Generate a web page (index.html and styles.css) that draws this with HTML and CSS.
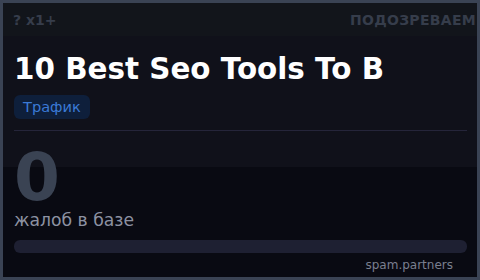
FILE: index.html
```html
<!DOCTYPE html>
<html lang="ru">
<head>
<meta charset="utf-8">
<link rel="stylesheet" href="styles.css">
</head>
<body>
<div class="frame">
  <div class="topbar">
    <span class="meta">? x1+</span>
    <span class="status">ПОДОЗРЕВАЕМ</span>
  </div>
  <div class="content">
    <h1 class="title">10 Best Seo Tools To B</h1>
    <span class="tag">Трафик</span>
    <hr class="divider">
    <div class="count">0</div>
    <div class="label">жалоб в базе</div>
    <div class="bar"></div>
    <div class="source">spam.partners</div>
  </div>
</div>
</body>
</html>
```
FILE: styles.css
```css
html, body {
  margin: 0;
  padding: 0;
  width: 480px;
  height: 280px;
  overflow: hidden;
  background: #090a12;
}
.frame {
  box-sizing: border-box;
  width: 480px;
  height: 280px;
  border: 3px solid #3a4354;
  overflow: hidden;
  display: flex;
  flex-direction: column;
  font-family: "DejaVu Sans", sans-serif;
}
.topbar {
  flex: none;
  height: 33px;
  display: flex;
  align-items: center;
  padding: 0 1px 0 10px;
  background: #12151b;
  font-weight: bold;
  color: #363d4b;
  white-space: nowrap;
}
.meta {
  font-size: 14px;
}
.status {
  margin-left: auto;
  font-size: 14px;
  letter-spacing: 0.3px;
}
.content {
  flex: 1;
  display: flex;
  flex-direction: column;
  align-items: flex-start;
  padding: 17px 10px 0 11px;
  background: linear-gradient(#10111a 0, #10111a 131px, #090a12 131px);
}
.title {
  margin: 0;
  font-size: 29.4px;
  font-weight: bold;
  color: #ffffff;
  white-space: nowrap;
  line-height: 33px;
}
.tag {
  margin-top: 9px;
  height: 24px;
  line-height: 24px;
  padding: 0 9px;
  border-radius: 6px;
  background: #0e1f3b;
  color: #3b7ad6;
  font-size: 14.6px;
}
.divider {
  align-self: stretch;
  margin: 11px 0 0;
  border: 0;
  height: 1px;
  background: #25253a;
}
.count {
  margin-top: 19px;
  font-size: 66px;
  line-height: 56px;
  font-weight: bold;
  color: #3a4353;
}
.label {
  margin-top: 4px;
  font-size: 17.2px;
  line-height: 20px;
  color: #8d92a2;
}
.bar {
  align-self: stretch;
  margin-top: 10px;
  height: 13px;
  border-radius: 6px;
  background: #1e2032;
}
.source {
  align-self: flex-end;
  margin-top: 5px;
  padding-right: 14px;
  font-size: 12px;
  line-height: 14px;
  color: #7a7f8f;
}
```
